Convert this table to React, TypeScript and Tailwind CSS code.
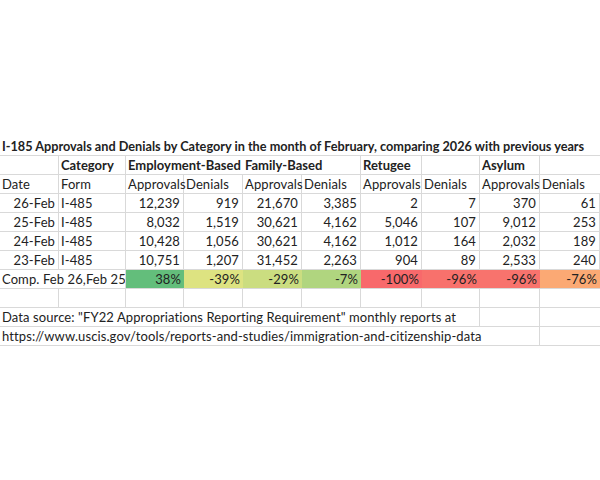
import React from "react";

type Cell = {
  t?: string;
  r?: boolean; // right aligned
  b?: boolean; // bold
  bg?: string; // fill class
  line?: boolean; // show right gridline
};

const L = (t = "", line = true): Cell => ({ t, line });
const N = (t: string): Cell => ({ t, r: true, line: true });
const H = (t = "", line = true): Cell => ({ t, b: true, line });

const dataRows: string[][] = [
  ["26-Feb", "12,239", "919", "21,670", "3,385", "2", "7", "370", "61"],
  ["25-Feb", "8,032", "1,519", "30,621", "4,162", "5,046", "107", "9,012", "253"],
  ["24-Feb", "10,428", "1,056", "30,621", "4,162", "1,012", "164", "2,032", "189"],
  ["23-Feb", "10,751", "1,207", "31,452", "2,263", "904", "89", "2,533", "240"],
];

const comp: [string, string][] = [
  ["38%", "bg-[#63be7b]"],
  ["-39%", "bg-[#dde381]"],
  ["-29%", "bg-[#cbdd80]"],
  ["-7%", "bg-[#b0d57f]"],
  ["-100%", "bg-[#f8696b]"],
  ["-96%", "bg-[#f8716c]"],
  ["-96%", "bg-[#f8736d]"],
  ["-76%", "bg-[#fba974]"],
];

const rows: Cell[][] = [
  [
    H(""),
    H("Category"),
    H("Employment-Based", false),
    H("", false),
    H("Family-Based", false),
    H(""),
    H("Retugee"),
    H(""),
    H("Asylum"),
    H("", false),
  ],
  [
    L("Date"),
    L("Form"),
    L("Approvals"),
    L("Denials"),
    L("Approvals"),
    L("Denials"),
    L("Approvals"),
    L("Denials"),
    L("Approvals"),
    L("Denials", false),
  ],
  ...dataRows.map((d) => [
    N(d[0]),
    L("I-485"),
    ...d.slice(1).map(N),
  ]),
  [
    L("Comp. Feb 26,Feb 25", false),
    L(""),
    ...comp.map(([t, bg]) => ({ t, r: true, bg })),
  ],
  [L(), L(), L(), L(), L(), L(), L(), L(), L(), L("", false)],
  [
    L('Data source: "FY22 Appropriations Reporting Requirement" monthly reports at', false),
    L("", false),
    L("", false),
    L("", false),
    L("", false),
    L("", false),
    L("", false),
    L(""),
    L(""),
    L("", false),
  ],
  [
    L("https://www.uscis.gov/tools/reports-and-studies/immigration-and-citizenship-data", false),
    L("", false),
    L("", false),
    L("", false),
    L("", false),
    L("", false),
    L("", false),
    L("", false),
    L(""),
    L("", false),
  ],
];

function GridCell({ c }: { c: Cell }) {
  return (
    <div
      className={[
        "flex h-[19px] items-end whitespace-nowrap border-b border-[#d9d9d9] pb-[1px] leading-[15px]",
        c.line ? "border-r" : "",
        c.r ? "justify-end pr-[3px]" : "pl-[2px]",
        c.b ? "font-bold text-[13px]" : "text-[13px] tracking-[0.1px]",
        c.bg ?? "",
      ].join(" ")}
    >
      {c.t}
    </div>
  );
}

export default function App() {
  return (
    <div className="h-[480px] w-[600px] overflow-hidden bg-white pt-[137px] font-['Lato','Noto_Sans',sans-serif] text-[#222]">
      <div className="grid grid-cols-[59px_67px_58px_59px_59px_59px_61px_58px_60px_60px]">
        <div className="col-span-10 flex h-[19px] items-end whitespace-nowrap border-b border-[#d9d9d9] pb-[1px] pl-[2px] text-[12.7px] font-bold leading-[15px]">
          I-185 Approvals and Denials by Category in the month of February, comparing 2026 with previous years
        </div>
        {rows.map((row, i) =>
          row.map((c, j) => <GridCell key={`${i}-${j}`} c={c} />)
        )}
      </div>
    </div>
  );
}
